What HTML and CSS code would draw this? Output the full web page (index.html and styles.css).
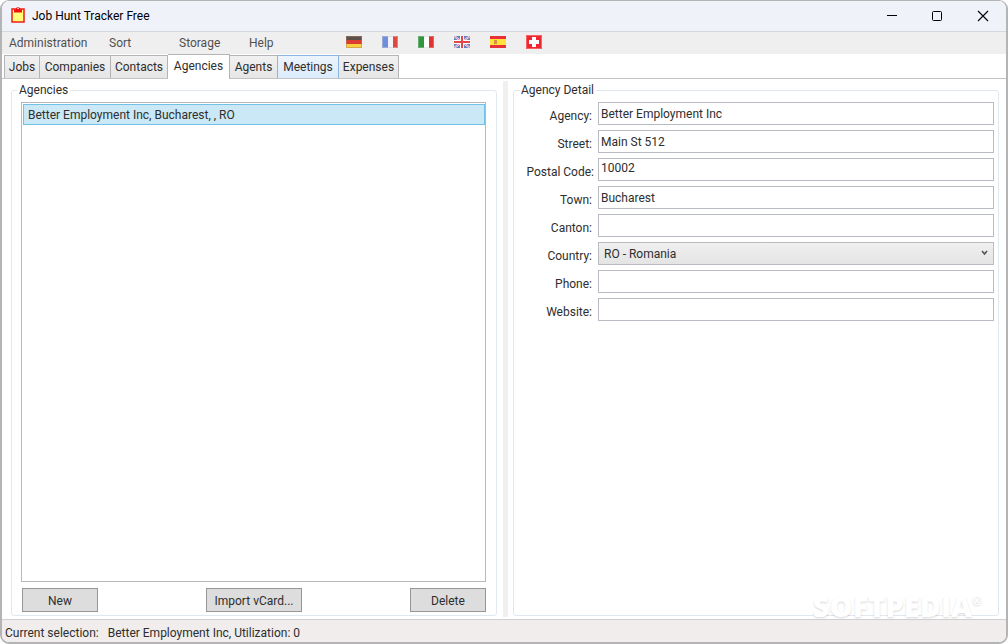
FILE: index.html
```html
<!DOCTYPE html>
<html lang="en">
<head>
    <meta charset="UTF-8">
    <meta name="viewport" content="width=device-width, initial-scale=1.0">
    <title>Job Hunt Tracker Free</title>
    <link rel="stylesheet" href="styles.css">
</head>
<body>
    <div class="window">
        <header class="titlebar">
            <svg class="app-icon" width="14" height="16" viewBox="0 0 14 16">
                <rect x="1" y="2" width="12" height="13" fill="#ffff7a" stroke="#f01818" stroke-width="1.500"/>
                <path d="M3 5.500V2.500h2V1q2-1.500 4 0v1.500h2v3z" fill="#f01010"/>
                <rect x="6" y="1" width="2" height="1" fill="#ffb0a0"/>
            </svg>
            <h1>Job Hunt Tracker Free</h1>
            <div class="window-buttons">
                <button type="button" aria-label="Minimize">
                    <svg width="12" height="12" viewBox="0 0 12 12"><path d="M2 5.500h10" stroke="#000"/></svg>
                </button>
                <button type="button" aria-label="Maximize">
                    <svg width="12" height="12" viewBox="0 0 12 12"><rect x="1.500" y="1.500" width="9" height="9" rx="1" fill="none" stroke="#000"/></svg>
                </button>
                <button type="button" aria-label="Close">
                    <svg width="12" height="12" viewBox="0 0 12 12"><path d="M1 1l10 10M11 1L1 11" stroke="#000" stroke-width="1.100"/></svg>
                </button>
            </div>
        </header>

        <nav class="menu">
            <button type="button" class="wide">Administration</button>
            <button type="button">Sort</button>
            <button type="button">Storage</button>
            <button type="button">Help</button>
            <div class="flags">
                <button type="button" aria-label="Deutsch">
                    <svg width="16" height="12" viewBox="0 0 16 12"><path fill="#5c504c" d="M0 0h16v4H0z"/><path fill="#dd3c30" d="M0 4h16v4H0z"/><path fill="#fad03c" d="M0 8h16v4H0z"/><path fill="none" stroke="#b08060" stroke-opacity=".5" d="M.5.5h15v11H.5z"/></svg>
                </button>
                <button type="button" aria-label="Français">
                    <svg width="16" height="12" viewBox="0 0 16 12"><path fill="#6f8fdc" d="M0 0h6v12H0z"/><path fill="#f2f4f8" d="M6 0h5v12H6z"/><path fill="#e0483e" d="M11 0h5v12h-5z"/><path fill="none" stroke="#c8c8d0" stroke-opacity=".5" d="M.5.5h15v11H.5z"/></svg>
                </button>
                <button type="button" aria-label="Italiano">
                    <svg width="16" height="12" viewBox="0 0 16 12"><path fill="#2c9a3c" d="M0 0h6v12H0z"/><path fill="#fff" d="M6 0h5v12H6z"/><path fill="#e03430" d="M11 0h5v12h-5z"/><path fill="none" stroke="#c8c8c8" stroke-opacity=".4" d="M.5.5h15v11H.5z"/></svg>
                </button>
                <button type="button" aria-label="English">
                    <svg width="16" height="12" viewBox="0 0 16 12"><path fill="#6480c4" d="M0 0h16v12H0z"/><path d="M0 0l16 12M16 0L0 12" stroke="#ece8f2" stroke-width="2"/><path d="M0 0l16 12M16 0L0 12" stroke="#e08c98"/><path d="M8 0v12M0 6h16" stroke="#fff" stroke-width="4"/><path d="M8 0v12M0 6h16" stroke="#e0484c" stroke-width="2"/></svg>
                </button>
                <button type="button" aria-label="Español">
                    <svg width="16" height="12" viewBox="0 0 16 12"><path fill="#e83038" d="M0 0h16v12H0z"/><path fill="#ffe23c" d="M0 3h16v6H0z"/><path fill="#d89040" d="M4 4h3v4H4z"/></svg>
                </button>
                <button type="button" aria-label="Schweiz">
                    <svg width="16" height="14" viewBox="0 0 16 14"><path fill="#ee2830" d="M0 0h16v14H0z"/><path fill="none" stroke="#f88" stroke-opacity=".6" d="M.5.5h15v13H.5z"/><path fill="#fff" d="M6 2h4v3h3v4h-3v3H6V9H3V5h3z"/></svg>
                </button>
            </div>
        </nav>

        <div class="tabs" role="tablist">
            <button type="button" role="tab">Jobs</button>
            <button type="button" role="tab">Companies</button>
            <button type="button" role="tab">Contacts</button>
            <button type="button" role="tab" class="selected" aria-selected="true">Agencies</button>
            <button type="button" role="tab">Agents</button>
            <button type="button" role="tab" class="hot">Meetings</button>
            <button type="button" role="tab">Expenses</button>
        </div>

        <main class="panes">
            <section class="pane">
                <fieldset class="list-group">
                    <legend>Agencies</legend>
                    <ul class="list" role="listbox" aria-label="Agencies">
                        <li role="option" aria-selected="true">Better Employment Inc, Bucharest, , RO</li>
                    </ul>
                    <div class="actions">
                        <button type="button">New</button>
                        <button type="button" class="import">Import vCard...</button>
                        <button type="button">Delete</button>
                    </div>
                </fieldset>
            </section>
            <div class="splitter"></div>
            <section class="pane">
                <fieldset class="detail-group">
                    <legend>Agency Detail</legend>
                    <form class="detail">
                        <label for="agency">Agency:</label>
                        <input type="text" id="agency" value="Better Employment Inc">
                        <label for="street">Street:</label>
                        <input type="text" id="street" value="Main St 512">
                        <label for="postal" class="long">Postal Code:</label>
                        <input type="text" id="postal" class="top" value="10002">
                        <label for="town">Town:</label>
                        <input type="text" id="town" value="Bucharest">
                        <label for="canton">Canton:</label>
                        <input type="text" id="canton">
                        <label for="country">Country:</label>
                        <div class="combo">
                            <select id="country">
                                <option>RO - Romania</option>
                            </select>
                            <svg width="7" height="6" viewBox="0 0 7 6"><path d="M1 1l2.500 3L6 1" fill="none" stroke="#555" stroke-width="1.600"/></svg>
                        </div>
                        <label for="phone">Phone:</label>
                        <input type="text" id="phone">
                        <label for="website">Website:</label>
                        <input type="text" id="website">
                    </form>
                </fieldset>
            </section>
        </main>

        <footer class="status">
            <span>Current selection:</span>
            <span>Better Employment Inc, Utilization: 0</span>
        </footer>
        <div class="watermark">SOFTPEDIA<sup>®</sup></div>
    </div>
</body>
</html>
```
FILE: styles.css
```css
* {
    box-sizing: border-box;
}
body {
    margin: 0;
    background-color: #fff;
    color: #2e2e2e;
    font-family: Roboto, "Open Sans", sans-serif;
    font-size: 12px;
    line-height: 16px;
}
button, input, select {
    font: inherit;
    color: inherit;
}
button {
    padding: 0;
    border: none;
    background: none;
}
svg {
    display: block;
}
.window {
    position: relative;
    display: flex;
    flex-direction: column;
    height: 100vh;
    border: 2px solid #b4b4b6;
    border-top-width: 1px;
    border-radius: 9px;
    background-color: #fff;
    overflow: hidden;
}

/* title bar */
.titlebar {
    display: flex;
    align-items: center;
    height: 31px;
    padding-left: 9px;
    background-color: #f0f2f9;
    border-bottom: 1px solid #d5d7dd;
}
.titlebar h1 {
    flex: 1;
    margin: 0 0 0 7px;
    font-size: 12px;
    font-weight: normal;
    color: #000;
}
.app-icon {
    margin-bottom: 2px;
}
.window-buttons {
    display: flex;
}
.window-buttons button {
    display: grid;
    place-items: center;
    width: 46px;
    height: 30px;
}

/* menu */
.menu {
    display: flex;
    align-items: center;
    height: 22px;
    padding-left: 7px;
    background-color: #efefef;
    color: #505050;
}
.menu > button {
    width: 70px;
    text-align: left;
}
.menu > .wide {
    width: 100px;
}
.flags {
    display: flex;
    align-items: center;
    gap: 20px;
    margin-left: 27px;
    padding-bottom: 2px;
}

/* tabs */
.tabs {
    display: grid;
    grid-template-columns: 36px 71px 57px 62px 48px 61px 60px;
    align-items: end;
    height: 25px;
    padding-left: 2px;
    border-bottom: 1px solid #c2c3c6;
}
.tabs button {
    height: 23px;
    border: 1px solid #b4b4b6;
    border-left-width: 0;
    border-bottom: none;
    background-image: linear-gradient(#f1f1f1, #e6e6e6);
}
.tabs button:first-child {
    border-left-width: 1px;
}
.tabs .selected {
    height: 25px;
    margin-bottom: -1px;
    padding-bottom: 2px;
    background: #fff;
}
.tabs .hot {
    margin-left: -1px;
    border-color: #8cb6e2;
    border-left-width: 1px;
    background-image: linear-gradient(#ecf4fc, #dcecfc);
}

/* panes */
.panes {
    display: flex;
    flex: 1;
    min-height: 0;
}
.pane {
    display: flex;
    flex: 1;
    min-width: 0;
    padding: 3px 7px 3px 5px;
}
.pane:first-child {
    padding: 3px 6px 3px 9px;
}
.splitter {
    width: 5px;
    margin: 2px 0;
    background-color: #f0f0f0;
}
fieldset {
    flex: 1;
    min-width: 0;
    margin: 0;
    padding: 4px 4px 3px;
    border: 1px solid #e2e8ef;
    border-radius: 3px;
}
legend {
    margin-left: 2px;
    padding: 0 2px 0 1px;
}
.list-group {
    display: flex;
    flex-direction: column;
    padding: 4px 10px 3px 9px;
}
.list-group legend {
    margin-left: -4px;
    padding: 0 2px;
}
.list {
    flex: 1;
    margin: 0;
    padding: 1px 0 1px 1px;
    border: 1px solid #b6b8bc;
    list-style: none;
}
.list li {
    padding: 2px 4px 1px;
    border: 1px solid #70c0e7;
    background-color: #cbe8f6;
}
.actions {
    display: flex;
    justify-content: space-between;
    margin-top: 6px;
    padding-left: 1px;
}
.actions button {
    width: 76px;
    height: 24px;
    padding-top: 2px;
    border: 1px solid #969696;
    background-color: #ddd;
}
.actions .import {
    width: 96px;
}

/* agency detail */
.detail {
    display: grid;
    grid-template-columns: 80px 1fr;
    grid-auto-rows: 23px;
    gap: 5px 0;
}
.detail label {
    padding: 6px 6px 0 0;
    text-align: right;
    white-space: nowrap;
}
.detail .long {
    padding-right: 4px;
}
.detail input {
    width: 100%;
    height: 23px;
    padding: 0 2px;
    border: 1px solid #b9bbc2;
    background-color: #fff;
}
.detail .top {
    padding-bottom: 4px;
}
.combo {
    position: relative;
}
.combo select {
    width: 100%;
    height: 23px;
    padding: 0 5px;
    border: 1px solid #b9bbc0;
    border-radius: 0;
    background-image: linear-gradient(#f0f0f0, #e4e4e4);
    appearance: none;
}
.combo svg {
    position: absolute;
    top: 8px;
    right: 6px;
    pointer-events: none;
}

/* status bar */
.status {
    display: flex;
    align-items: center;
    gap: 9px;
    height: 23px;
    padding: 4px 0 0 3px;
    border-top: 1px solid #cfcfd1;
    background-color: #f0edec;
}
.watermark {
    position: absolute;
    right: 24px;
    bottom: 20px;
    font-family: "Open Sans", sans-serif;
    font-size: 29px;
    font-weight: 800;
    line-height: 32px;
    color: #fff;
    text-shadow: 0 1px 2px rgba(0, 0, 0, 0.16);
    pointer-events: none;
}
.watermark sup {
    font-size: 12px;
    line-height: 0;
    vertical-align: 12px;
}
```
